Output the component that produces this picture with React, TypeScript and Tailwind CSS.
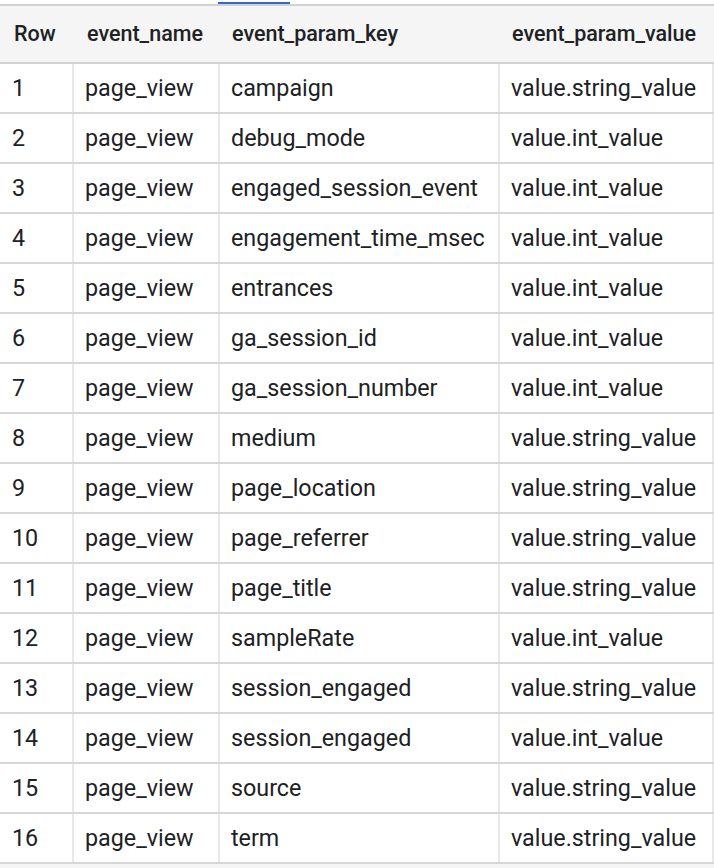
import React from 'react';

const rows: [string, string, string][] = [
  ['page_view', 'campaign', 'value.string_value'],
  ['page_view', 'debug_mode', 'value.int_value'],
  ['page_view', 'engaged_session_event', 'value.int_value'],
  ['page_view', 'engagement_time_msec', 'value.int_value'],
  ['page_view', 'entrances', 'value.int_value'],
  ['page_view', 'ga_session_id', 'value.int_value'],
  ['page_view', 'ga_session_number', 'value.int_value'],
  ['page_view', 'medium', 'value.string_value'],
  ['page_view', 'page_location', 'value.string_value'],
  ['page_view', 'page_referrer', 'value.string_value'],
  ['page_view', 'page_title', 'value.string_value'],
  ['page_view', 'sampleRate', 'value.int_value'],
  ['page_view', 'session_engaged', 'value.string_value'],
  ['page_view', 'session_engaged', 'value.int_value'],
  ['page_view', 'source', 'value.string_value'],
  ['page_view', 'term', 'value.string_value'],
];

function App() {
  return (
    <div className="min-h-screen bg-[#f5f5f5] text-[#202124]" style={{ fontFamily: 'Roboto, "Liberation Sans", sans-serif' }}>
      {/* Tab indicator strip */}
      <div className="h-[4px] bg-white flex items-end">
        <div className="ml-[218px] w-[72px] h-[2px] bg-[#3367d6]" />
      </div>

      {/* Header */}
      <div className="flex h-[60px] border-t-2 border-b-2 border-[#d2d2d2] bg-[#f5f5f5] text-[21.5px] font-medium">
        <div className="w-[74px] flex items-center pl-[14px]">Row</div>
        <div className="w-[146px] flex items-center pl-[13px]">event_name</div>
        <div className="w-[280px] flex items-center pl-[12px]">event_param_key</div>
        <div className="w-[214px] flex items-center pl-[12px]">event_param_value</div>
      </div>

      {/* Rows */}
      {rows.map(([name, key, value], i) => (
        <div key={i} className="flex h-[50px] bg-white border-b-2 border-[#d6d6d6] text-[23.3px]">
          <div className="w-[74px] flex items-center pl-[12px] pt-[1px] border-r-2 border-[#e8e8e8]">{i + 1}</div>
          <div className="w-[146px] flex items-center pl-[11px] pt-[1px] border-r-2 border-[#e8e8e8]">{name}</div>
          <div className="w-[280px] flex items-center pl-[11px] pt-[1px] border-r-2 border-[#e8e8e8]">{key}</div>
          <div className="w-[214px] flex items-center pl-[11px] pt-[1px] border-r-2 border-[#e8e8e8]">{value}</div>
        </div>
      ))}
    </div>
  );
}

export default App;
